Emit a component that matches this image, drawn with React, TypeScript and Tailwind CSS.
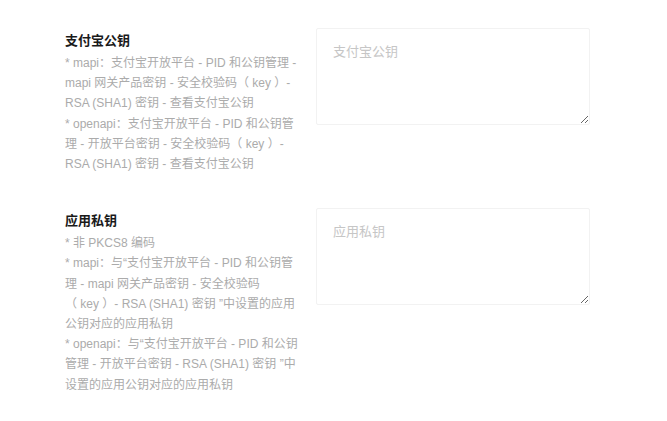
import React from "react";

type Field = {
  title: string;
  placeholder: string;
  lines: string[];
};

// each entry is one visual line, wrapped as in the design
const fields: Field[] = [
  {
    title: "支付宝公钥",
    placeholder: "支付宝公钥",
    lines: [
      "* mapi：支付宝开放平台 - PID 和公钥管理 -",
      "mapi 网关产品密钥 - 安全校验码（ key ）-",
      "RSA (SHA1) 密钥 - 查看支付宝公钥",
      "* openapi：支付宝开放平台 - PID 和公钥管",
      "理 - 开放平台密钥 - 安全校验码（ key ）-",
      "RSA (SHA1) 密钥 - 查看支付宝公钥",
    ],
  },
  {
    title: "应用私钥",
    placeholder: "应用私钥",
    lines: [
      "* 非 PKCS8 编码",
      "* mapi：与“支付宝开放平台 - PID 和公钥管",
      "理 - mapi 网关产品密钥 - 安全校验码",
      "（ key ）- RSA (SHA1) 密钥 ”中设置的应用",
      "公钥对应的应用私钥",
      "* openapi：与“支付宝开放平台 - PID 和公钥",
      "管理 - 开放平台密钥 - RSA (SHA1) 密钥 ”中",
      "设置的应用公钥对应的应用私钥",
    ],
  },
];

const App: React.FC = () => {
  return (
    <div
      className="min-h-[421px] bg-white pt-[28px] pl-[65px]"
      style={{ fontFamily: '"Liberation Sans", "Noto Sans CJK SC", sans-serif' }}
    >
      {fields.map((f) => (
        <div key={f.title} className="flex gap-[16px] mb-[34px]">
          <div className="w-[235px] pt-[3px]">
            <h3 className="text-[13px] leading-[20px] font-bold text-[#1a1a1a]">
              {f.title}
            </h3>
            <div className="mt-[2px] text-[12px] leading-[20.2px] text-[#ababab]">
              {f.lines.map((l, i) => (
                <p key={i} className="whitespace-nowrap">
                  {l}
                </p>
              ))}
            </div>
          </div>
          <textarea
            placeholder={f.placeholder}
            className="w-[274px] h-[97px] border border-[#f2f2f2] rounded-[2px] px-[16px] py-[13px] text-[13px] leading-[20px] outline-none placeholder:text-[#c6c6c6]"
          />
        </div>
      ))}
    </div>
  );
};

export default App;
